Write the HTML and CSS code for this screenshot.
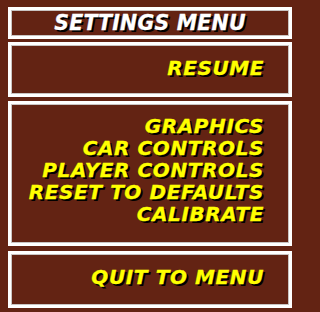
FILE: index.html
```html
<!DOCTYPE html>
<html>
<head>
<meta charset="utf-8">
<link rel="stylesheet" href="styles.css">
</head>
<body>
<div class="menu">
  <div class="box title-box"><h1 class="title">SETTINGS MENU</h1></div>
  <div class="box item-box resume-box"><div class="item">RESUME</div></div>
  <div class="box item-box list-box">
    <div class="item">GRAPHICS</div>
    <div class="item">CAR CONTROLS</div>
    <div class="item">PLAYER CONTROLS</div>
    <div class="item">RESET TO DEFAULTS</div>
    <div class="item">CALIBRATE</div>
  </div>
  <div class="box item-box quit-box"><div class="item">QUIT TO MENU</div></div>
</div>
</body>
</html>
```
FILE: styles.css
```css
html, body {
  background: #632313;
}
body {
  margin: 7px 8px 0 8px;
  font-family: "DejaVu Sans", "Liberation Sans", sans-serif;
}
.menu {
  width: 284px;
  display: flex;
  flex-direction: column;
}
.box {
  border: 3px solid #ffffff;
  box-shadow: inset 0 0 0 1px #c9c4c2;
  box-sizing: border-box;
}
.title-box {
  height: 32px;
  display: flex;
  align-items: center;
  justify-content: center;
}
.title {
  margin: 0;
  font-size: 20.5px;
  font-weight: 700;
  font-style: italic;
  color: #ffffff;
  line-height: 22px;
  letter-spacing: 0.2px;
  text-shadow: 2px 2px 0 #000;
  -webkit-text-stroke: 0.3px #ffffff;
}
.item-box {
  display: flex;
  flex-direction: column;
  align-items: flex-end;
  padding-right: 25px;
}
.item {
  font-size: 20px;
  font-weight: 700;
  font-style: italic;
  color: #ffff00;
  line-height: 22px;
  letter-spacing: 0.6px;
  text-shadow: 2px 2px 0 #000;
  -webkit-text-stroke: 0.3px #ffff00;
}
.resume-box {
  margin-top: 3px;
  height: 55px;
  justify-content: center;
  padding-bottom: 4px;
}
.list-box {
  margin-top: 4px;
  height: 145px;
  padding-top: 11px;
}
.quit-box {
  margin-top: 5px;
  height: 57px;
  justify-content: center;
  padding-bottom: 6px;
}
```
